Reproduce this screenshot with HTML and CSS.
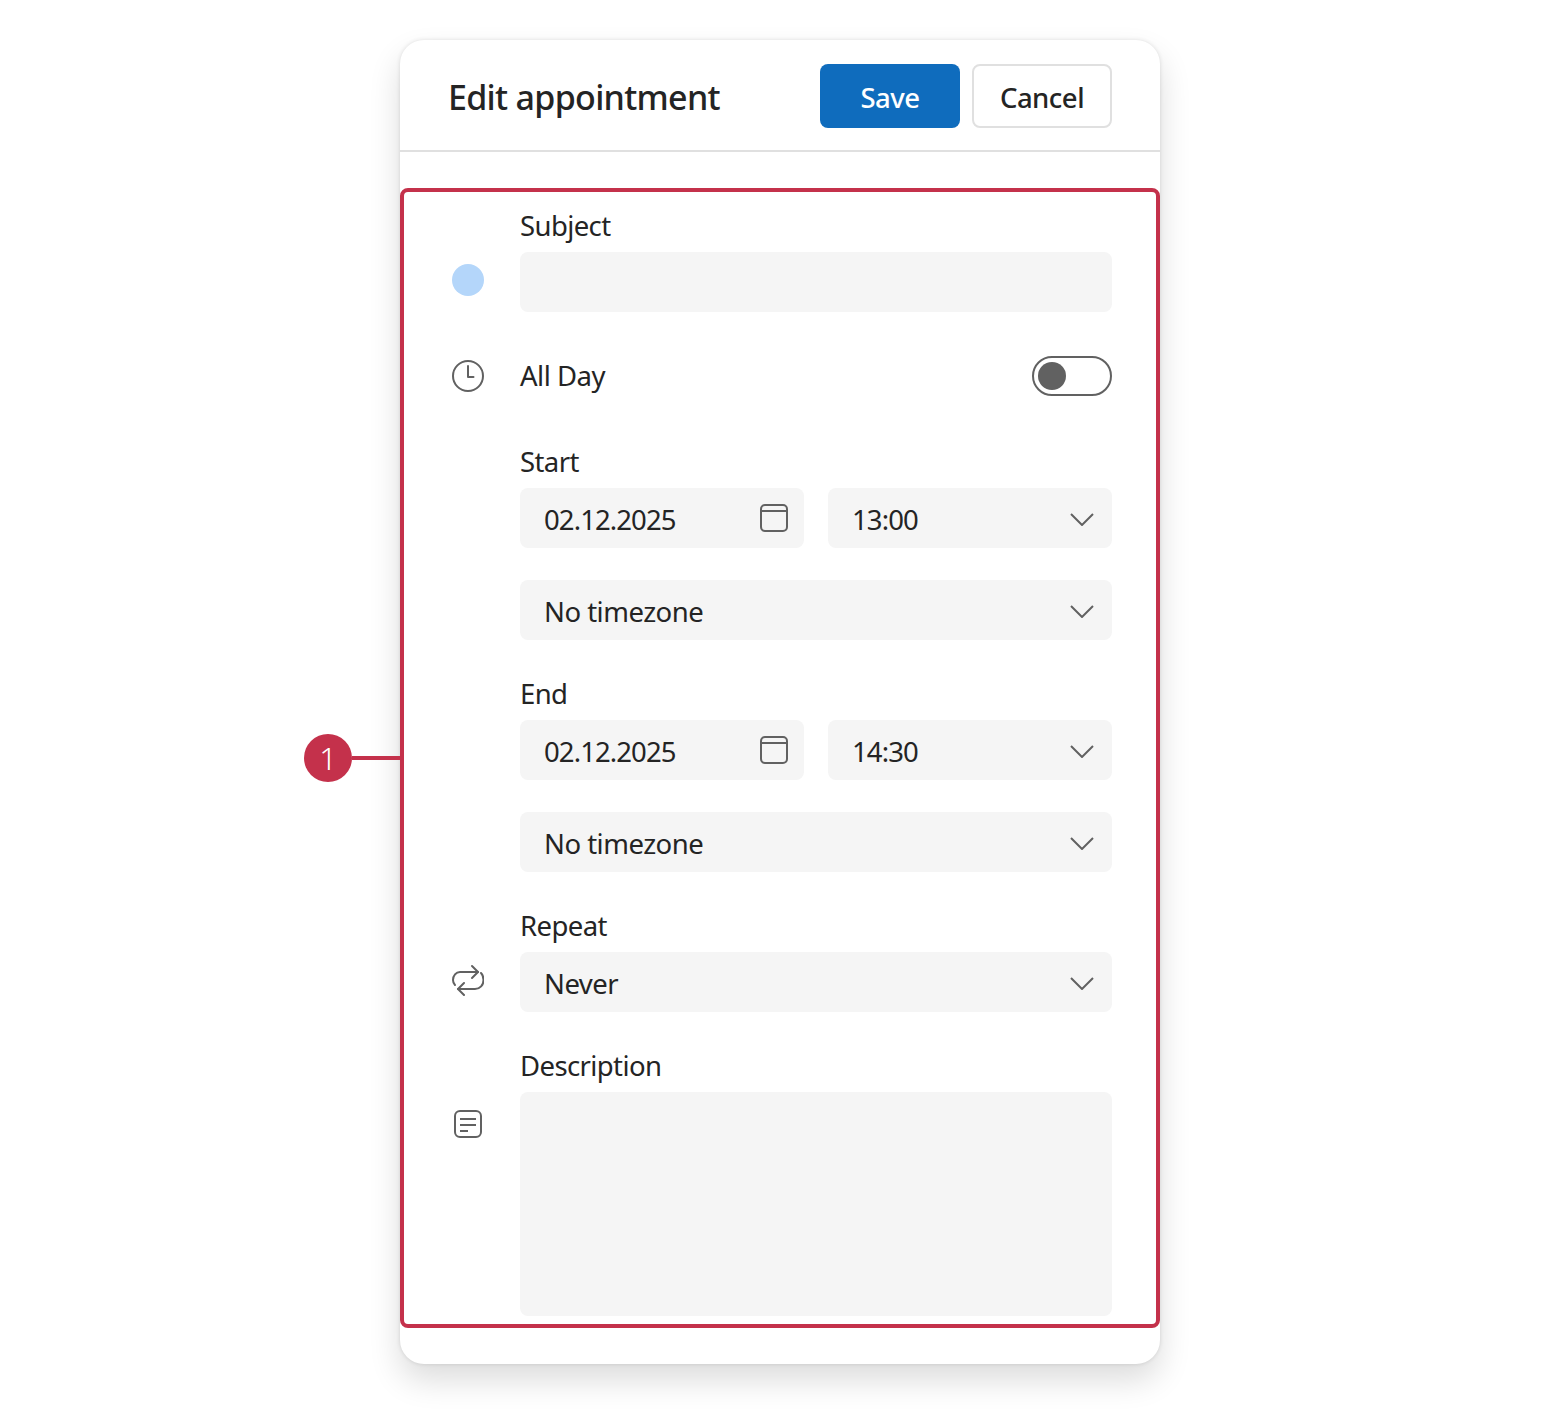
FILE: index.html
```html
<!DOCTYPE html>
<html lang="en">
<head>
<meta charset="utf-8">
<title>Edit appointment</title>
<link rel="stylesheet" href="styles.css">
</head>
<body>
<main class="card">
  <header class="head">
    <h1 class="title">Edit appointment</h1>
    <div class="actions">
      <button class="btn btn-primary">Save</button>
      <button class="btn btn-outline">Cancel</button>
    </div>
  </header>
  <form class="body">
    <div class="row row-subject">
      <div class="icon-cell icon-cell-field"><span class="dot"></span></div>
      <div class="stack">
        <label class="label">Subject</label>
        <div class="field"></div>
      </div>
    </div>
    <div class="row row-allday">
      <div class="icon-cell">
        <svg class="icon" viewBox="0 0 32 32" fill="none" stroke="#616161" stroke-width="2"><circle cx="16" cy="16" r="15"/><path d="M16 6v11h5.500" stroke-linecap="round" stroke-linejoin="round"/></svg>
      </div>
      <div class="allday">
        <span class="text">All Day</span>
        <span class="toggle"><span class="knob"></span></span>
      </div>
    </div>
    <div class="row row-start">
      <div class="icon-cell"></div>
      <div class="stack">
        <label class="label">Start</label>
        <div class="pair">
          <div class="field field-value"><span class="text num">02.12.2025</span>
            <svg class="cal" viewBox="0 0 28 28" fill="none" stroke="#616161" stroke-width="2"><rect x="1" y="1" width="26" height="26" rx="4"/><path d="M1 7h26"/></svg></div>
          <div class="field field-value"><span class="text num">13:00</span>
            <svg class="chev" viewBox="0 0 24 13" fill="none" stroke="#616161" stroke-width="2"><path d="M1 1l11 11L23 1"/></svg></div>
        </div>
        <div class="field field-value field-after"><span class="text">No timezone</span>
          <svg class="chev" viewBox="0 0 24 13" fill="none" stroke="#616161" stroke-width="2"><path d="M1 1l11 11L23 1"/></svg></div>
      </div>
    </div>
    <div class="row">
      <div class="icon-cell"></div>
      <div class="stack">
        <label class="label">End</label>
        <div class="pair">
          <div class="field field-value"><span class="text num">02.12.2025</span>
            <svg class="cal" viewBox="0 0 28 28" fill="none" stroke="#616161" stroke-width="2"><rect x="1" y="1" width="26" height="26" rx="4"/><path d="M1 7h26"/></svg></div>
          <div class="field field-value"><span class="text num">14:30</span>
            <svg class="chev" viewBox="0 0 24 13" fill="none" stroke="#616161" stroke-width="2"><path d="M1 1l11 11L23 1"/></svg></div>
        </div>
        <div class="field field-value field-after"><span class="text">No timezone</span>
          <svg class="chev" viewBox="0 0 24 13" fill="none" stroke="#616161" stroke-width="2"><path d="M1 1l11 11L23 1"/></svg></div>
      </div>
    </div>
    <div class="row">
      <div class="icon-cell icon-cell-field">
        <svg class="icon" viewBox="0 0 32 32" fill="none" stroke="#616161" stroke-width="2" stroke-linecap="round" stroke-linejoin="round"><path d="M3 21C1.500 19.500 1 18 1 16 1 11.500 4 8 8 8H26"/><path d="M20 2l6 6-6 6"/><path d="M29 9c2 2 2.500 4 2.500 7 0 5-3.500 9-8.500 9H6"/><path d="M12 19l-6 6 6 6"/></svg>
      </div>
      <div class="stack">
        <label class="label">Repeat</label>
        <div class="field field-value"><span class="text">Never</span>
          <svg class="chev" viewBox="0 0 24 13" fill="none" stroke="#616161" stroke-width="2"><path d="M1 1l11 11L23 1"/></svg></div>
      </div>
    </div>
    <div class="row">
      <div class="icon-cell icon-cell-note">
        <svg class="icon" viewBox="0 0 32 32" fill="none" stroke="#616161" stroke-width="2"><rect x="3" y="3" width="26" height="26" rx="5"/><path d="M8 11h16M8 17h16M8 23h8"/></svg>
      </div>
      <div class="stack">
        <label class="label">Description</label>
        <div class="field field-area"></div>
      </div>
    </div>
  </form>
  <div class="callout"></div>
  <div class="marker"><span class="badge">1</span><span class="leader"></span></div>
</main>
</body>
</html>
```
FILE: styles.css
```css
* { box-sizing: border-box; }
html, body { margin: 0; background: #fff; }
body {
  height: 1412px;
  padding-top: 40px;
  font-family: "Noto Sans", "Open Sans", sans-serif;
  color: #242424;
  overflow: hidden;
}
.card {
  position: relative;
  width: 760px;
  height: 1324px;
  margin: 0 auto;
  background: #fff;
  border-radius: 24px;
  box-shadow: 0 0 4px rgba(0,0,0,.12), 0 16px 32px rgba(0,0,0,.14);
}
.head {
  display: flex;
  align-items: center;
  justify-content: space-between;
  padding: 24px 48px 22px 48px;
  border-bottom: 2px solid #e0e0e0;
}
.title { margin: 0; padding-top: 2px; font-size: 34px; font-weight: 550; line-height: 48px; letter-spacing: -.7px; }
.actions { display: flex; gap: 12px; }
.btn {
  width: 140px;
  height: 64px;
  border-radius: 8px;
  font: 500 27.500px/36px "Noto Sans", sans-serif;
  letter-spacing: -.5px;
  padding: 3px 0 0;
}
.btn-primary { background: #0f6cbd; color: #fff; border: 0; }
.btn-outline { background: #fff; color: #242424; border: 2px solid #e0e0e0; }
.body { display: flex; flex-direction: column; gap: 40px; padding: 60px 48px 48px; }
.row { display: flex; gap: 32px; }
.row-subject { margin-bottom: 4px; }
.row-allday { margin-bottom: 12px; align-items: center; }
.icon-cell { width: 40px; flex: none; display: flex; justify-content: center; }
.icon-cell-field { padding-top: 52px; }
.icon-cell-note { padding-top: 56px; }
.icon { width: 32px; height: 32px; display: block; }
.dot { width: 32px; height: 32px; border-radius: 50%; background: #b4d6fa; display: block; }
.stack { flex: 1; min-width: 0; display: flex; flex-direction: column; }
.label { display: block; height: 32px; margin-bottom: 8px; font-size: 27.500px; letter-spacing: -.6px; line-height: 27px; }
.text { font-size: 27.500px; letter-spacing: -.5px; line-height: 36px; }
.num { letter-spacing: -.9px; }
.field { height: 60px; background: #f5f5f5; border-radius: 8px; }
.field-value { display: flex; align-items: center; justify-content: space-between; padding: 2px 18px 0 24px; }
.field-value .text { padding-top: 2px; }
.field-after { margin-top: 32px; }
.field-area { height: 224px; }
.pair { display: flex; gap: 24px; }
.pair .field-value { flex: 1 1 0; }
.cal { width: 28px; height: 28px; margin: 0 -2px 2px 0; }
.chev { width: 24px; height: 13px; }
.allday { flex: 1; display: flex; align-items: center; justify-content: space-between; }
.toggle {
  width: 80px; height: 40px;
  border: 2px solid #616161;
  border-radius: 20px;
  display: flex; align-items: center;
  padding-left: 4px;
}
.knob { width: 28px; height: 28px; border-radius: 50%; background: #616161; }
.callout {
  position: absolute;
  left: 0; right: 0; top: 148px; height: 1140px;
  border: 4px solid #c4314b;
  border-radius: 8px;
  pointer-events: none;
}
.marker { position: absolute; left: -96px; top: 694px; display: flex; align-items: center; width: 96px; }
.badge {
  width: 48px; height: 48px; flex: none;
  border-radius: 50%;
  background: #c4314b; color: #fff;
  font-size: 31px; font-weight: 300; line-height: 48px; text-align: center;
}
.leader { flex: 1; height: 4px; background: #c4314b; }
```
